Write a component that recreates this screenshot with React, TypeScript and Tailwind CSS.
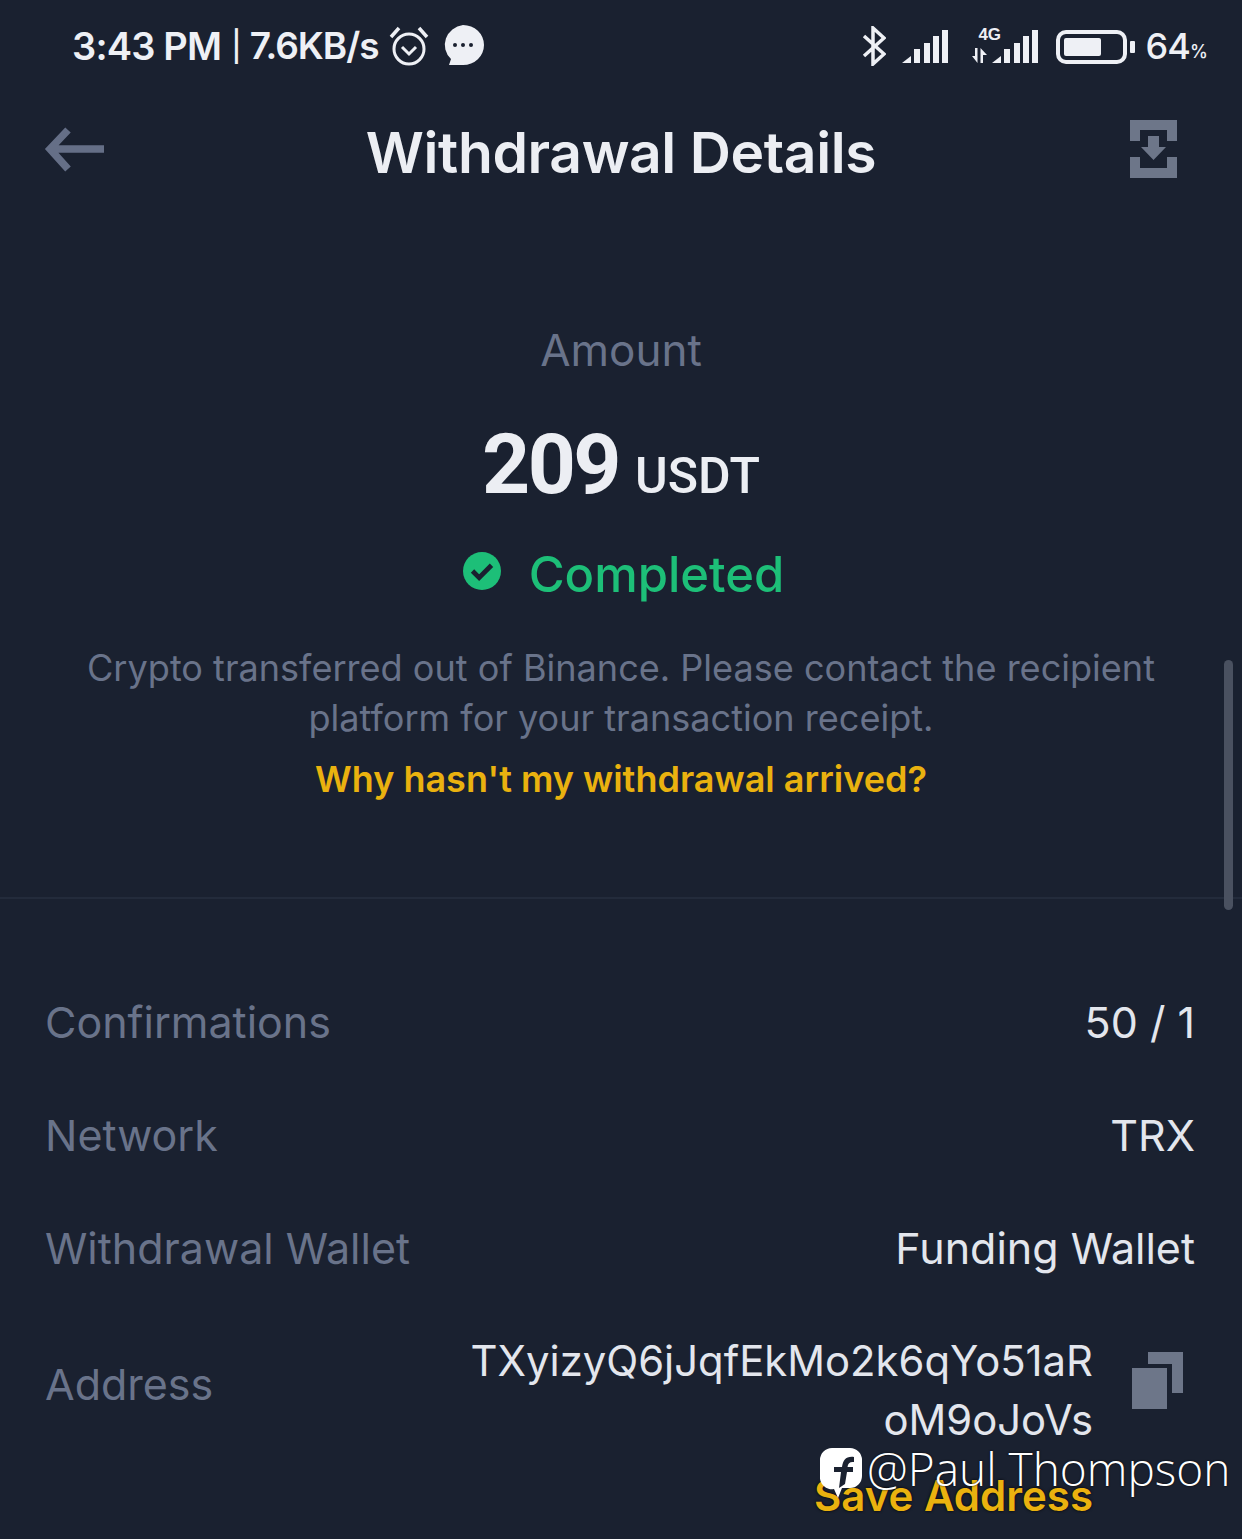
import { Fragment } from "react";

const rows = [
  { label: "Confirmations", value: "50 / 1" },
  { label: "Network", value: "TRX" },
  { label: "Withdrawal Wallet", value: "Funding Wallet" },
];

function Signal({ className }: { className: string }) {
  return (
    <svg className={className} width="46" height="33" viewBox="0 0 46 33" fill="#eef0f5">
      <path d="M0 33 L9 26 V33 Z" />
      <rect x="12" y="19" width="6" height="14" />
      <rect x="22" y="13" width="6" height="20" />
      <rect x="31" y="6" width="6" height="27" />
      <rect x="40" y="0" width="6" height="33" />
    </svg>
  );
}

function StatusBar() {
  return (
    <div className="flex h-[92px] items-center justify-between pl-[72px] pr-[35px] text-[#eef0f5]">
      <div className="flex items-center">
        <span className="text-[38px] font-semibold tracking-[-0.8px]">3:43 PM</span>
        <span className="ml-[10px] text-[30px] font-medium">|</span>
        <span className="ml-[8px] text-[37px] font-semibold tracking-[-1px]">7.6KB/s</span>
        <svg className="ml-[10px]" width="40" height="42" viewBox="0 0 40 42" fill="none" stroke="#eef0f5">
          <circle cx="20" cy="24" r="15" strokeWidth="3" />
          <path d="M13 22 L20 29 L27 22" strokeWidth="3" />
          <path d="M2 12 L10 3 M38 12 L30 3" strokeWidth="3.5" />
        </svg>
        <svg className="ml-[12px]" width="44" height="44" viewBox="0 0 44 44">
          <path d="M22 1 A21 20 0 1 1 22 41 H8 L10 35 A21 20 0 0 1 22 1 Z" fill="#eef0f5" />
          <circle cx="14" cy="21" r="2" fill="#1a2130" />
          <circle cx="22" cy="21" r="2" fill="#1a2130" />
          <circle cx="30" cy="21" r="2" fill="#1a2130" />
        </svg>
      </div>
      <div className="flex items-center">
        <svg width="24" height="40" viewBox="0 0 24 40" fill="none" stroke="#eef0f5" strokeWidth="3.5">
          <path d="M2 10 L22 28 L11 38 V2 L22 12 L2 30" />
        </svg>
        <Signal className="ml-[16px] mt-[1px]" />
        <div className="relative ml-[24px] mt-[1px] h-[33px] w-[66px]">
          <span className="absolute left-[6px] top-[-5px] font-['Liberation_Sans',sans-serif] text-[17px] font-bold leading-[20px]">4G</span>
          <Signal className="absolute bottom-0 right-0" />
          <svg className="absolute bottom-0 left-0" width="15" height="15" viewBox="0 0 15 15" fill="#eef0f5">
            <path d="M0 8 H3 V0 H5.5 V15 Z M8.5 15 V0 L15 7 H11 V15 Z" />
          </svg>
        </div>
        <div className="ml-[18px] mt-[1px] flex h-[34px] w-[71px] items-center rounded-[10px] border-[4px] border-[#eef0f5] px-[4px]">
          <div className="h-[18px] w-[37px] rounded-[2px] bg-[#eef0f5]" />
        </div>
        <div className="ml-[3px] mt-[1px] h-[12px] w-[5px] rounded-[1px] bg-[#eef0f5]" />
        <span className="ml-[10px] text-[36px] font-medium tracking-[-0.8px]">64</span>
        <span className="mt-[10px] text-[18px] font-medium tracking-[-1px]">%</span>
      </div>
    </div>
  );
}

function Header() {
  return (
    <div className="relative flex h-[120px] items-center justify-center">
      <svg className="absolute left-[44px] top-[34px]" width="60" height="48" viewBox="0 0 60 48" fill="none" stroke="#656f87" strokeWidth="7.5">
        <path d="M24 4 L6 23 L24 43 M7 23 H60" />
      </svg>
      <h1 className="mt-[2px] text-[57px] font-semibold tracking-[-0.4px] text-[#eceef3]">Withdrawal Details</h1>
      <svg className="absolute right-[65px] top-[28px]" width="47" height="58" viewBox="0 0 47 58" fill="#6d7689">
        <path d="M0 0 H47 V21 H37 V10 H10 V21 H0 Z M0 37 H10 V48 H37 V37 H47 V58 H0 Z" />
        <path d="M18 16 H29 V27 H36 L23.5 40 L11 27 H18 Z" />
      </svg>
    </div>
  );
}

function Summary() {
  return (
    <div className="flex h-[687px] flex-col items-center border-b-2 border-[#232b3b] pt-[114px]">
      <div className="flex h-[48px] items-center text-[44px] text-[#69738a]">Amount</div>
      <div className="mt-[48px] flex h-[86px] items-baseline text-[#eceef3]">
        <span className="font-['Roboto',sans-serif] text-[84px] font-bold leading-[86px] tracking-[-2.5px]">209</span>
        <span className="ml-[16px] font-['Roboto',sans-serif] text-[50px] font-medium">USDT</span>
      </div>
      <div className="mt-[37px] flex h-[60px] items-center pl-[5px]">
        <svg className="mb-[8px]" width="38" height="38" viewBox="0 0 40 40">
          <circle cx="20" cy="20" r="20" fill="#1dbf78" />
          <path d="M10 20 L17 27 L30 14" fill="none" stroke="#1a2130" strokeWidth="5" />
        </svg>
        <span className="ml-[28px] text-[49px] font-medium text-[#1dbf78]">Completed</span>
      </div>
      <p className="mt-[38px] w-[1120px] text-center text-[36.1px] leading-[50px] text-[#69738a]">
        Crypto transferred out of Binance. Please contact the recipient platform for your transaction receipt.
      </p>
      <div className="mt-[11px] text-[36px] font-semibold leading-[50px] text-[#eab20f]">Why hasn't my withdrawal arrived?</div>
    </div>
  );
}

function Details() {
  return (
    <div className="pl-[45px] pr-[47px] pt-[67px]">
      {rows.map((row) => (
        <Fragment key={row.label}>
          <div className="flex h-[113px] items-center justify-between text-[43px]">
            <span className="text-[#69738a]">{row.label}</span>
            <span className="text-[#e3e6ed]">{row.value}</span>
          </div>
        </Fragment>
      ))}
      <div className="flex items-start justify-between text-[43px]">
        <span className="mt-[47px] text-[#69738a]">Address</span>
        <div className="flex items-start pt-[27px]">
          <div className="text-right">
            <div className="w-[640px] text-[41.8px] leading-[59px] text-[#e3e6ed]">
              TXyizyQ6jJqfEkMo2k6qYo51aR<br />oM9oJoVs
            </div>
            <div className="mt-[21px] text-[42px] font-semibold leading-[50px] text-[#eab20f] [text-shadow:0_0_3px_#000]">Save Address</div>
          </div>
          <svg className="ml-[39px] mr-[12px] mt-[20px]" width="51" height="57" viewBox="0 0 51 57" fill="#6d7689">
            <path d="M16 0 H51 V41 H40 V12 H16 Z" />
            <rect x="0" y="16" width="35" height="41" />
          </svg>
        </div>
      </div>
    </div>
  );
}

export default function App() {
  return (
    <div className="relative h-[1539px] w-[1242px] overflow-hidden bg-[#1a2130] font-['Inter',sans-serif]">
      <StatusBar />
      <Header />
      <Summary />
      <Details />
      <div className="absolute left-[1224px] top-[660px] h-[250px] w-[9px] rounded-full bg-[#4a5160]" />
      <div className="absolute left-[820px] top-[1448px] flex items-start text-white">
        <svg width="42" height="50" viewBox="0 0 42 50">
          <path d="M12 0 H30 A12 12 0 0 1 42 12 V28 A12 12 0 0 1 30 40 H22 L18 50 L14 41 A12 12 0 0 1 0 28 V12 A12 12 0 0 1 12 0 Z" fill="#fff" />
          <path d="M19 40 L21 24 H14 V19 H22 C23 12 26 8 34 9 V14 C30 13.5 28 15 27.5 19 H33 V24 H27 L25 36 Z" fill="#1a2130" />
        </svg>
        <span className="ml-[5px] -mt-[5px] font-['Open_Sans',sans-serif] text-[46px] font-light leading-[50px] [text-shadow:0_0_2px_#000]">@Paul Thompson</span>
      </div>
    </div>
  );
}
